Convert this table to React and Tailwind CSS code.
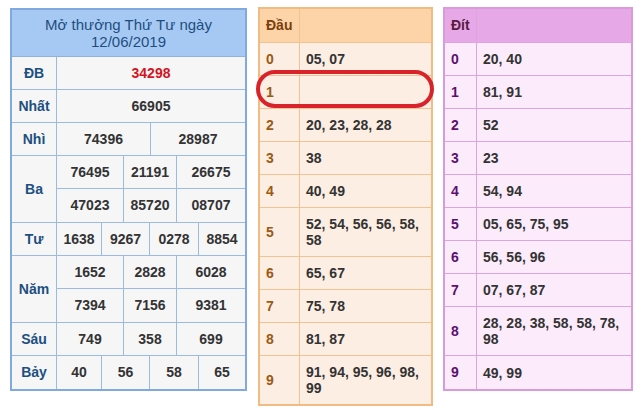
const font = { fontFamily: '"Liberation Sans", Arial, sans-serif' };

const Cell = ({ w, last, children, className = "" }) => (
  <div
    className={`flex items-center justify-center ${last ? "" : "border-r border-[#9dbbe2]"} ${w} ${className}`}
  >
    {children}
  </div>
);

const Row = ({ label, values, widths, red, last }) => (
  <div className={`flex h-[33px] ${last ? "" : "border-b border-[#9dbbe2]"}`}>
    <div className="w-[45px] border-r border-[#9dbbe2] flex items-center justify-center text-[#1d4f80]">
      {label}
    </div>
    {values.map((v, i) => (
      <Cell key={i} w={widths[i]} last={i === values.length - 1} className={red ? "text-[#d4141e]" : ""}>
        {v}
      </Cell>
    ))}
  </div>
);

const DoubleRow = ({ label, rows, widths }) => (
  <div className="flex border-b border-[#9dbbe2]">
    <div className="w-[45px] border-r border-[#9dbbe2] flex items-center justify-center text-[#1d4f80]">
      {label}
    </div>
    <div className="flex flex-col flex-1">
      {rows.map((r, ri) => (
        <div key={ri} className={`flex h-[33px] ${ri === 0 ? "border-b border-[#9dbbe2]" : ""}`}>
          {r.map((v, i) => (
            <Cell key={i} w={widths[i]} last={i === r.length - 1}>
              {v}
            </Cell>
          ))}
        </div>
      ))}
    </div>
  </div>
);

const W1 = ["w-[188px]"];
const W2 = ["w-[94px]", "w-[94px]"];
const W3 = ["w-[67px]", "w-[53px]", "w-[68px]"];
const W4 = ["w-[45px]", "w-[48px]", "w-[49px]", "w-[46px]"];

const dau = [
  ["0", "05, 07"],
  ["1", ""],
  ["2", "20, 23, 28, 28"],
  ["3", "38"],
  ["4", "40, 49"],
  ["5", "52, 54, 56, 56, 58, 58"],
  ["6", "65, 67"],
  ["7", "75, 78"],
  ["8", "81, 87"],
  ["9", "91, 94, 95, 96, 98, 99"],
];

const dit = [
  ["0", "20, 40"],
  ["1", "81, 91"],
  ["2", "52"],
  ["3", "23"],
  ["4", "54, 94"],
  ["5", "05, 65, 75, 95"],
  ["6", "56, 56, 96"],
  ["7", "07, 67, 87"],
  ["8", "28, 28, 38, 58, 58, 78, 98"],
  ["9", "49, 99"],
];

const SideTable = ({ title, rows, theme }) => (
  <div className={`border-2 ${theme.border} ${theme.cellBg}`} style={{ width: theme.width }}>
    <div className={`flex h-[34px] border-b ${theme.line} ${theme.headBg}`}>
      <div className={`${theme.labelW} border-r ${theme.line} flex items-center pl-[6px] ${theme.headText}`}>
        {title}
      </div>
      <div className="flex-1" />
    </div>
    {rows.map(([k, v], i) => (
      <div key={k} className={`flex min-h-[33px] ${i === rows.length - 1 ? "" : `border-b ${theme.line}`}`}>
        <div className={`${theme.labelW} shrink-0 border-r ${theme.line} flex items-center pl-[6px] ${theme.labelText}`}>
          {k}
        </div>
        <div className="flex-1 flex items-center px-[6px] py-[8px] leading-[16px] text-[#333333]">{v}</div>
      </div>
    ))}
  </div>
);

export default function App() {
  return (
    <div className="w-[642px] h-[410px] bg-white relative text-[14px] font-bold" style={font}>
      <div className="flex items-start pl-[10px] pt-[8px]">
        {/* Kết quả */}
        <div className="w-[237px] border-2 border-[#80a9de] bg-[#f6f6f7] text-[#333333]">
          <div className="h-[47px] bg-[#a6c9f4] border-b border-[#8fb1dc] flex flex-col items-center justify-center font-normal text-[15px] text-[#1f4e7e] leading-[17px]">
            <span>Mở thưởng Thứ Tư ngày</span>
            <span>12/06/2019</span>
          </div>
          <Row label="ĐB" values={["34298"]} widths={W1} red />
          <Row label="Nhất" values={["66905"]} widths={W1} />
          <Row label="Nhì" values={["74396", "28987"]} widths={W2} />
          <DoubleRow label="Ba" rows={[["76495", "21191", "26675"], ["47023", "85720", "08707"]]} widths={W3} />
          <Row label="Tư" values={["1638", "9267", "0278", "8854"]} widths={W4} />
          <DoubleRow label="Năm" rows={[["1652", "2828", "6028"], ["7394", "7156", "9381"]]} widths={W3} />
          <Row label="Sáu" values={["749", "358", "699"]} widths={W3} />
          <Row label="Bảy" values={["40", "56", "58", "65"]} widths={W4} last />
        </div>

        {/* Đầu */}
        <div className="ml-[11px] -mt-[1px]">
          <SideTable
            title="Đầu"
            rows={dau}
            theme={{
              width: 175,
              border: "border-[#f1bb84]",
              line: "border-[#f1c394]",
              cellBg: "bg-[#fdeee3]",
              headBg: "bg-[#fdd4a8]",
              headText: "text-[#7a3f0c]",
              labelText: "text-[#9b5a14]",
              labelW: "w-[40px]",
            }}
          />
        </div>

        {/* Đít */}
        <div className="ml-[10px] -mt-[1px]">
          <SideTable
            title="Đít"
            rows={dit}
            theme={{
              width: 190,
              border: "border-[#d99bd9]",
              line: "border-[#dca6dc]",
              cellBg: "bg-[#fcecfb]",
              headBg: "bg-[#e7a8e7]",
              headText: "text-[#5a1b40]",
              labelText: "text-[#5c1070]",
              labelW: "w-[32px]",
            }}
          />
        </div>
      </div>

      {/* khoanh đỏ */}
      <div className="absolute left-[256px] top-[70px] w-[178px] h-[38px] border-4 border-[#d8232a] rounded-[19px]" />
    </div>
  );
}
